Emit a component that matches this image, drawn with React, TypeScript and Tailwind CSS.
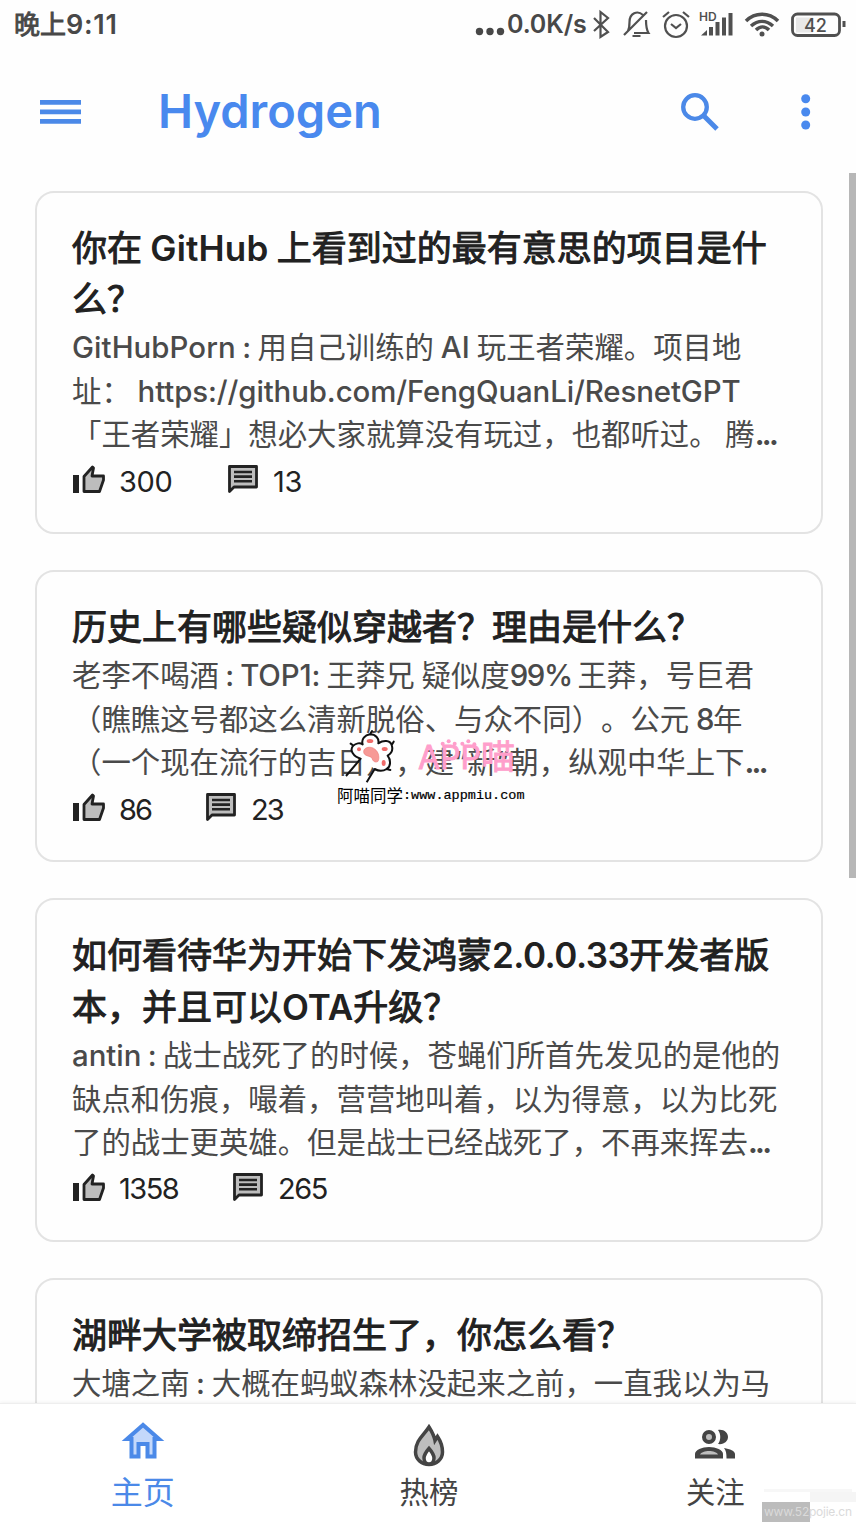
import React from "react";

type Run = { t: string; c?: string };
type Story = { title: Run[][]; body: Run[][]; likes: string; comments: string; gap: string; digits: string };

const bold = "font-semibold [-webkit-text-stroke:0px]";
const dots = "font-bold tracking-[-2.700px]";

const stories: Story[] = [
  {
    title: [[{ t: "你在 " }, { t: "GitHub", c: `${bold} tracking-[0.150px]` }, { t: " 上看到过的最有意思的项目是什" }], [{ t: "么？" }]],
    body: [
      [{ t: "GitHubPorn : ", c: "font-medium tracking-[0.080px]" }, { t: "用自己训练的 " }, { t: "AI ", c: "font-medium tracking-[0.300px]" }, { t: "玩王者荣耀。项目地" }],
      [{ t: "址： " }, { t: "https://github.com/FengQuanLi/ResnetGPT", c: "font-medium tracking-[-0.100px]" }],
      [{ t: "「王者荣耀」想必大家就算没有玩过，也都听过。 腾" }, { t: "...", c: dots }],
    ],
    likes: "300",
    comments: "13",
    gap: "w-[156px]",
    digits: "tracking-[-0.400px]",
  },
  {
    title: [[{ t: "历史上有哪些疑似穿越者？理由是什么？" }]],
    body: [
      [{ t: "老李不喝酒" }, { t: " : TOP1: ", c: "font-medium tracking-[-0.120px]" }, { t: "王莽兄 疑似度" }, { t: "99", c: "font-medium tracking-[-1.400px]" }, { t: "% ", c: "font-medium tracking-[-1px]" }, { t: "王莽，号巨君" }],
      [{ t: "（瞧瞧这号都这么清新脱俗、与众不同）。公元 " }, { t: "8", c: "font-medium tracking-[-1.500px]" }, { t: "年" }],
      [{ t: "（一个现在流行的吉日），建“新”朝，纵观中华上下" }, { t: "...", c: dots }],
    ],
    likes: "86",
    comments: "23",
    gap: "w-[134px]",
    digits: "tracking-[-1.900px]",
  },
  {
    title: [
      [{ t: "如何看待华为开始下发鸿蒙" }, { t: "2.0.0.33", c: `${bold} tracking-[-0.500px]` }, { t: "开发者版" }],
      [{ t: "本，并且可以" }, { t: "OTA", c: bold }, { t: "升级？" }],
    ],
    body: [
      [{ t: "antin : ", c: "font-medium" }, { t: "战士战死了的时候，苍蝇们所首先发见的是他的" }],
      [{ t: "缺点和伤痕，嘬着，营营地叫着，以为得意，以为比死" }],
      [{ t: "了的战士更英雄。但是战士已经战死了，不再来挥去" }, { t: "...", c: dots }],
    ],
    likes: "1358",
    comments: "265",
    gap: "w-[161px]",
    digits: "tracking-[-1.500px]",
  },
  {
    title: [[{ t: "湖畔大学被取缔招生了，你怎么看？" }]],
    body: [[{ t: "大塘之南" }, { t: " : ", c: "font-medium tracking-[0.200px]" }, { t: "大概在蚂蚁森林没起来之前，一直我以为马" }]],
    likes: "",
    comments: "",
    gap: "",
    digits: "",
  },
];

const Line = ({ runs, className }: { runs: Run[]; className: string }) => (
  <div className={`whitespace-pre ${className}`}>
    {runs.map((r, i) => (
      <span key={i} className={r.c}>{r.t}</span>
    ))}
  </div>
);

const ThumbIcon = () => (
  <svg className="relative -top-[2px] left-px" width="33" height="30" viewBox="0 0 33 30">
    <path d="M0 11h6v18H0z" fill="#222" />
    <path d="M11 12.500 19.500 3l1 1-1.500 8h11.500v4l-4 11.500H11z" fill="#bdbdbd" stroke="#222" strokeWidth="2.800" strokeLinejoin="round" />
  </svg>
);

const CommentIcon = () => (
  <svg className="relative -top-[2px]" width="30" height="30" viewBox="0 0 30 30">
    <path d="M1.500 2.500h27v20.500H6l-4.500 4.500z" fill="#bdbdbd" stroke="#222" strokeWidth="2.800" strokeLinejoin="round" />
    <path d="M6 8h18M6 12.600h18M6 17.200h18" stroke="#222" strokeWidth="2.600" />
  </svg>
);

const Card = ({ s }: { s: Story }) => (
  <article className="shrink-0 rounded-[19px] border-2 border-[#e3e3e3] px-[35px] pt-[30.200px] pb-[26.500px]">
    {s.title.map((l, i) => (
      <Line key={i} runs={l} className="h-[51.700px] text-[35px] leading-[51.700px] text-[#212121] [word-spacing:-1.500px] [-webkit-text-stroke:1px_#212121]" />
    ))}
    {s.body.map((l, i) => (
      <Line key={i} runs={l} className="h-[43.700px] text-[29.400px] leading-[43.300px] text-[#4a4a4a] [word-spacing:-1.500px]" />
    ))}
    <div className="flex h-[48.600px] items-center text-[29px] text-[#222]">
      {s.likes && (
        <>
          <div className={`flex items-center gap-[14px] ${s.gap}`}>
            <ThumbIcon />
            <span className={s.digits}>{s.likes}</span>
          </div>
          <div className="flex items-center gap-[15px]">
            <CommentIcon />
            <span className={s.digits}>{s.comments}</span>
          </div>
        </>
      )}
    </div>
  </article>
);

const StatusBar = () => (
  <header className="flex h-[50px] shrink-0 items-center justify-between pl-[14px] text-[26px] font-semibold text-[#484848]">
    <span className="whitespace-pre">
      <span className="font-normal [-webkit-text-stroke:0.900px_#484848]">晚上</span>
      <span className="text-[27px] tracking-[0.700px]">9:11</span>
    </span>
    <div className="flex items-center">
      <svg width="32" height="24" viewBox="0 0 32 24" fill="#484848">
        <circle cx="4.500" cy="18.500" r="3.700" /><circle cx="15" cy="18.500" r="3.700" /><circle cx="25.500" cy="18.500" r="3.700" />
      </svg>
      <span className="w-[85px] text-[25px] tracking-[-0.100px] whitespace-pre">0.0K/s</span>
      <svg width="264" height="34" viewBox="592 8 264 34" fill="none" stroke="#505050" strokeWidth="2.200">
        <path d="m594 18 14 14-7.500 5V12l7.500 6-14 13" />
        <path d="m624 35 23-23M628 31c1.500-3 1.500-6 1.500-9 0-9 8-12 13.500-7M646 20c0 6 0 9 2.500 13H634M632.500 36h8" />
        <circle cx="676" cy="26" r="11" />
        <path d="m671 24 5 4 5-4M663 17l6-5M689 17l-6-5" />
        <path d="m701 35.500 6-5.500v5.500z" fill="#505050" stroke="none" />
        <path d="M711 35.500V27M717.500 35.500V22M724 35.500V17.500M730.500 35.500V13" strokeWidth="4" />
        <path d="M746 21c9-9 23-9 32 0M751 26c7-6 15-6 22 0M756 30c4-4 9-4 13 0" strokeWidth="3.500" />
        <circle cx="762" cy="34" r="2.500" fill="#505050" stroke="none" />
        <rect x="792.500" y="14" width="47" height="21.500" rx="5" strokeWidth="2.800" />
        <path d="M796 17.500h17v15h-17z" fill="#e8e8e8" stroke="none" />
        <path d="M844 21v6" strokeWidth="3" />
        <text x="699" y="20.500" fontSize="12" fontWeight="600" fill="#505050" stroke="none">HD</text>
        <text x="804" y="31.500" fontSize="18" fontWeight="500" fill="#505050" stroke="none">42</text>
      </svg>
    </div>
  </header>
);

const AppBar = () => (
  <div className="flex h-[123px] shrink-0 items-center pl-10">
    <svg width="41" height="24" viewBox="0 0 41 24" fill="#4b89e8"><path d="M0 0h41v4.700H0zM0 9.500h41v4.700H0zM0 19h41v4.700H0z" /></svg>
    <h1 className="ml-[77px] w-[523px] pb-[2px] text-[47px] leading-[60px] font-semibold text-[#4989ee]">Hydrogen</h1>
    <svg width="38" height="38" viewBox="0 0 38 38" fill="none" stroke="#4b89e8" strokeWidth="4.300">
      <circle cx="14" cy="14" r="11.800" /><path d="m23 23 13 13" strokeWidth="5" />
    </svg>
    <svg className="ml-[82px]" width="10" height="36" viewBox="0 0 10 36" fill="#4989ee">
      <circle cx="4.700" cy="4.800" r="4.500" /><circle cx="4.700" cy="18" r="4.500" /><circle cx="4.700" cy="31" r="4.500" />
    </svg>
  </div>
);

const BottomNav = () => (
  <nav className="z-10 grid h-[119px] shrink-0 grid-cols-3 border-t border-[#eeeeee] bg-white pt-4 text-[29.400px] leading-[45px] text-[#444] shadow-[0_-1px_3px_rgba(0,0,0,0.05)]">
    <div className="flex flex-col items-center text-[32px] text-[#4b89e8]">
      <svg width="44" height="50" viewBox="0 0 44 50">
        <path d="M22 5 6 19h4.500v17.500h7V24h9v12.500h7V19H38z" fill="#c4d8fb" stroke="#4b89e8" strokeWidth="4" />
      </svg>
      <span>主页</span>
    </div>
    <div className="flex flex-col items-center pl-[2px]">
      <svg width="36" height="50" viewBox="0 0 36 50">
        <path d="M18 7C13 15 4.500 20 4.500 32c0 7 6 12.500 13.500 12.500S31.500 39 31.500 32c0-6-2-11-5-15.500l-2.500 4C23 15 20.500 11 18 7z" fill="#bebebe" stroke="#444" strokeWidth="3.500" />
        <path d="M18 28.500c-3.500 4-5 6-5 9.500s2 6 5 6 5-2.500 5-6-1.500-5.500-5-9.500z" fill="#fff" stroke="#444" strokeWidth="3.500" />
      </svg>
      <span>热榜</span>
    </div>
    <div className="flex flex-col items-center pl-[4px]">
      <svg width="42" height="50" viewBox="2 0 42 50">
        <circle cx="17" cy="17" r="5" fill="#bebebe" stroke="#444" strokeWidth="4" />
        <path d="M3 38.500v-4.500c0-4 7-7 14-7s14 3 14 7v4.500z" fill="#444" />
        <path d="M8 34.500c1-2 5-3.500 9-3.500s8 1.500 9 3.500z" fill="#bebebe" />
        <path d="M26 10c6-1 10 3 10 7s-4 8-10 7c3-4 3-10 0-14zM32 28c6 1 11 3 11 6v4.500h-8.500c0-5-.5-8-2.500-10.500z" fill="#444" />
      </svg>
      <span>关注</span>
    </div>
  </nav>
);

const CatMark = () => (
  <div className="absolute top-[725px] left-[335px] z-20 h-[85px] w-[195px]">
    <div className="absolute top-[10px] left-[83px] text-[32px] leading-[44px] whitespace-pre text-[#ff9ecb] [-webkit-text-stroke:0.800px_#ff9ecb]">
      APP<span className="text-[34px]">喵</span>
    </div>
    <svg className="absolute top-0 left-0" width="195" height="60" viewBox="0 0 585 180">
      <path
        d="M77 101C55 95 42 75 55 62 62 55 75 52 83 58 78 42 90 30 105 28c17 0 28 12 25 27 15-10 35-10 40 5 6 18-5 28-12 32 10 13 10 33-3 40-13 8-25 6-36 0z"
        fill="#fff"
      />
      <path
        d="m33 153 44-52C55 95 42 75 55 62l-8-6 8 6c7-7 20-10 28-4-5-16 7-28 22-30l6-10-6 10c17 0 28 12 25 27 15-10 35-10 40 5l6-10-6 10c6 18-5 28-12 32 10 13 10 33-3 40l11 3-11-3c-13 8-25 6-36 0l-24 40"
        fill="none" stroke="#111" strokeWidth="6" strokeLinejoin="round"
      />
      <path d="M86 80c0-14 22-18 34-7 12 9 14 27 9 36-8 5-16 0-18-10-6-7-25-5-25-19z" fill="#f79a96" stroke="#ee7b78" strokeWidth="2" />
      <g fill="#f06c6a"><ellipse cx="105" cy="48" rx="10" ry="6" /><ellipse cx="72" cy="73" rx="6" ry="6" /><ellipse cx="149" cy="72" rx="9" ry="6" /><ellipse cx="146" cy="114" rx="6" ry="9" /></g>
      <g fill="#ff9ecb">
        <circle cx="323" cy="56" r="6" /><circle cx="341" cy="49" r="6" /><circle cx="359" cy="56" r="6" />
        <circle cx="382" cy="56" r="6" /><circle cx="400" cy="49" r="6" /><circle cx="418" cy="58" r="6" />
      </g>
    </svg>
    <div className="absolute top-[61px] left-[2px] flex h-5 items-center text-[16.500px] leading-5 whitespace-pre text-black">
      阿喵同学<span className="font-['Liberation_Mono'] text-[13.500px] [-webkit-text-stroke:0.200px_#000]">:www.appmiu.com</span>
    </div>
  </div>
);

export default function App() {
  return (
    <div className="relative flex h-[1522px] w-[856px] flex-col overflow-hidden bg-[#fefefe] font-[Inter,'Noto_Sans_CJK_SC',sans-serif] [text-spacing-trim:space-all]">
      <StatusBar />
      <AppBar />
      <main className="flex min-h-0 flex-1 justify-between overflow-hidden pl-[35px]">
        <div className="flex w-[788px] flex-col gap-[36px] pt-[17.500px]">
          {stories.map((s, i) => <Card key={i} s={s} />)}
        </div>
        <div className="h-[705px] w-[7px] bg-[#b7b7b7]" />
      </main>
      <BottomNav />
      <CatMark />
      <div className="absolute right-0 bottom-0 z-20 h-[35px] w-[94px]">
        <div className="absolute top-[2px] left-[2px] h-[3px] w-[88px] bg-[#f7f7f7]" />
        <div className="absolute top-[5px] left-[48px] h-[10px] w-[46px] bg-[#f5f5f5]" />
        <div className="absolute top-[15px] left-0 h-[20px] w-[48px] bg-[#bcbcbc]" />
        <span className="absolute top-[16px] left-[2px] text-[12px] leading-[18px] tracking-[-0.250px] text-[#dadada]">www.52pojie.cn</span>
      </div>
    </div>
  );
}
